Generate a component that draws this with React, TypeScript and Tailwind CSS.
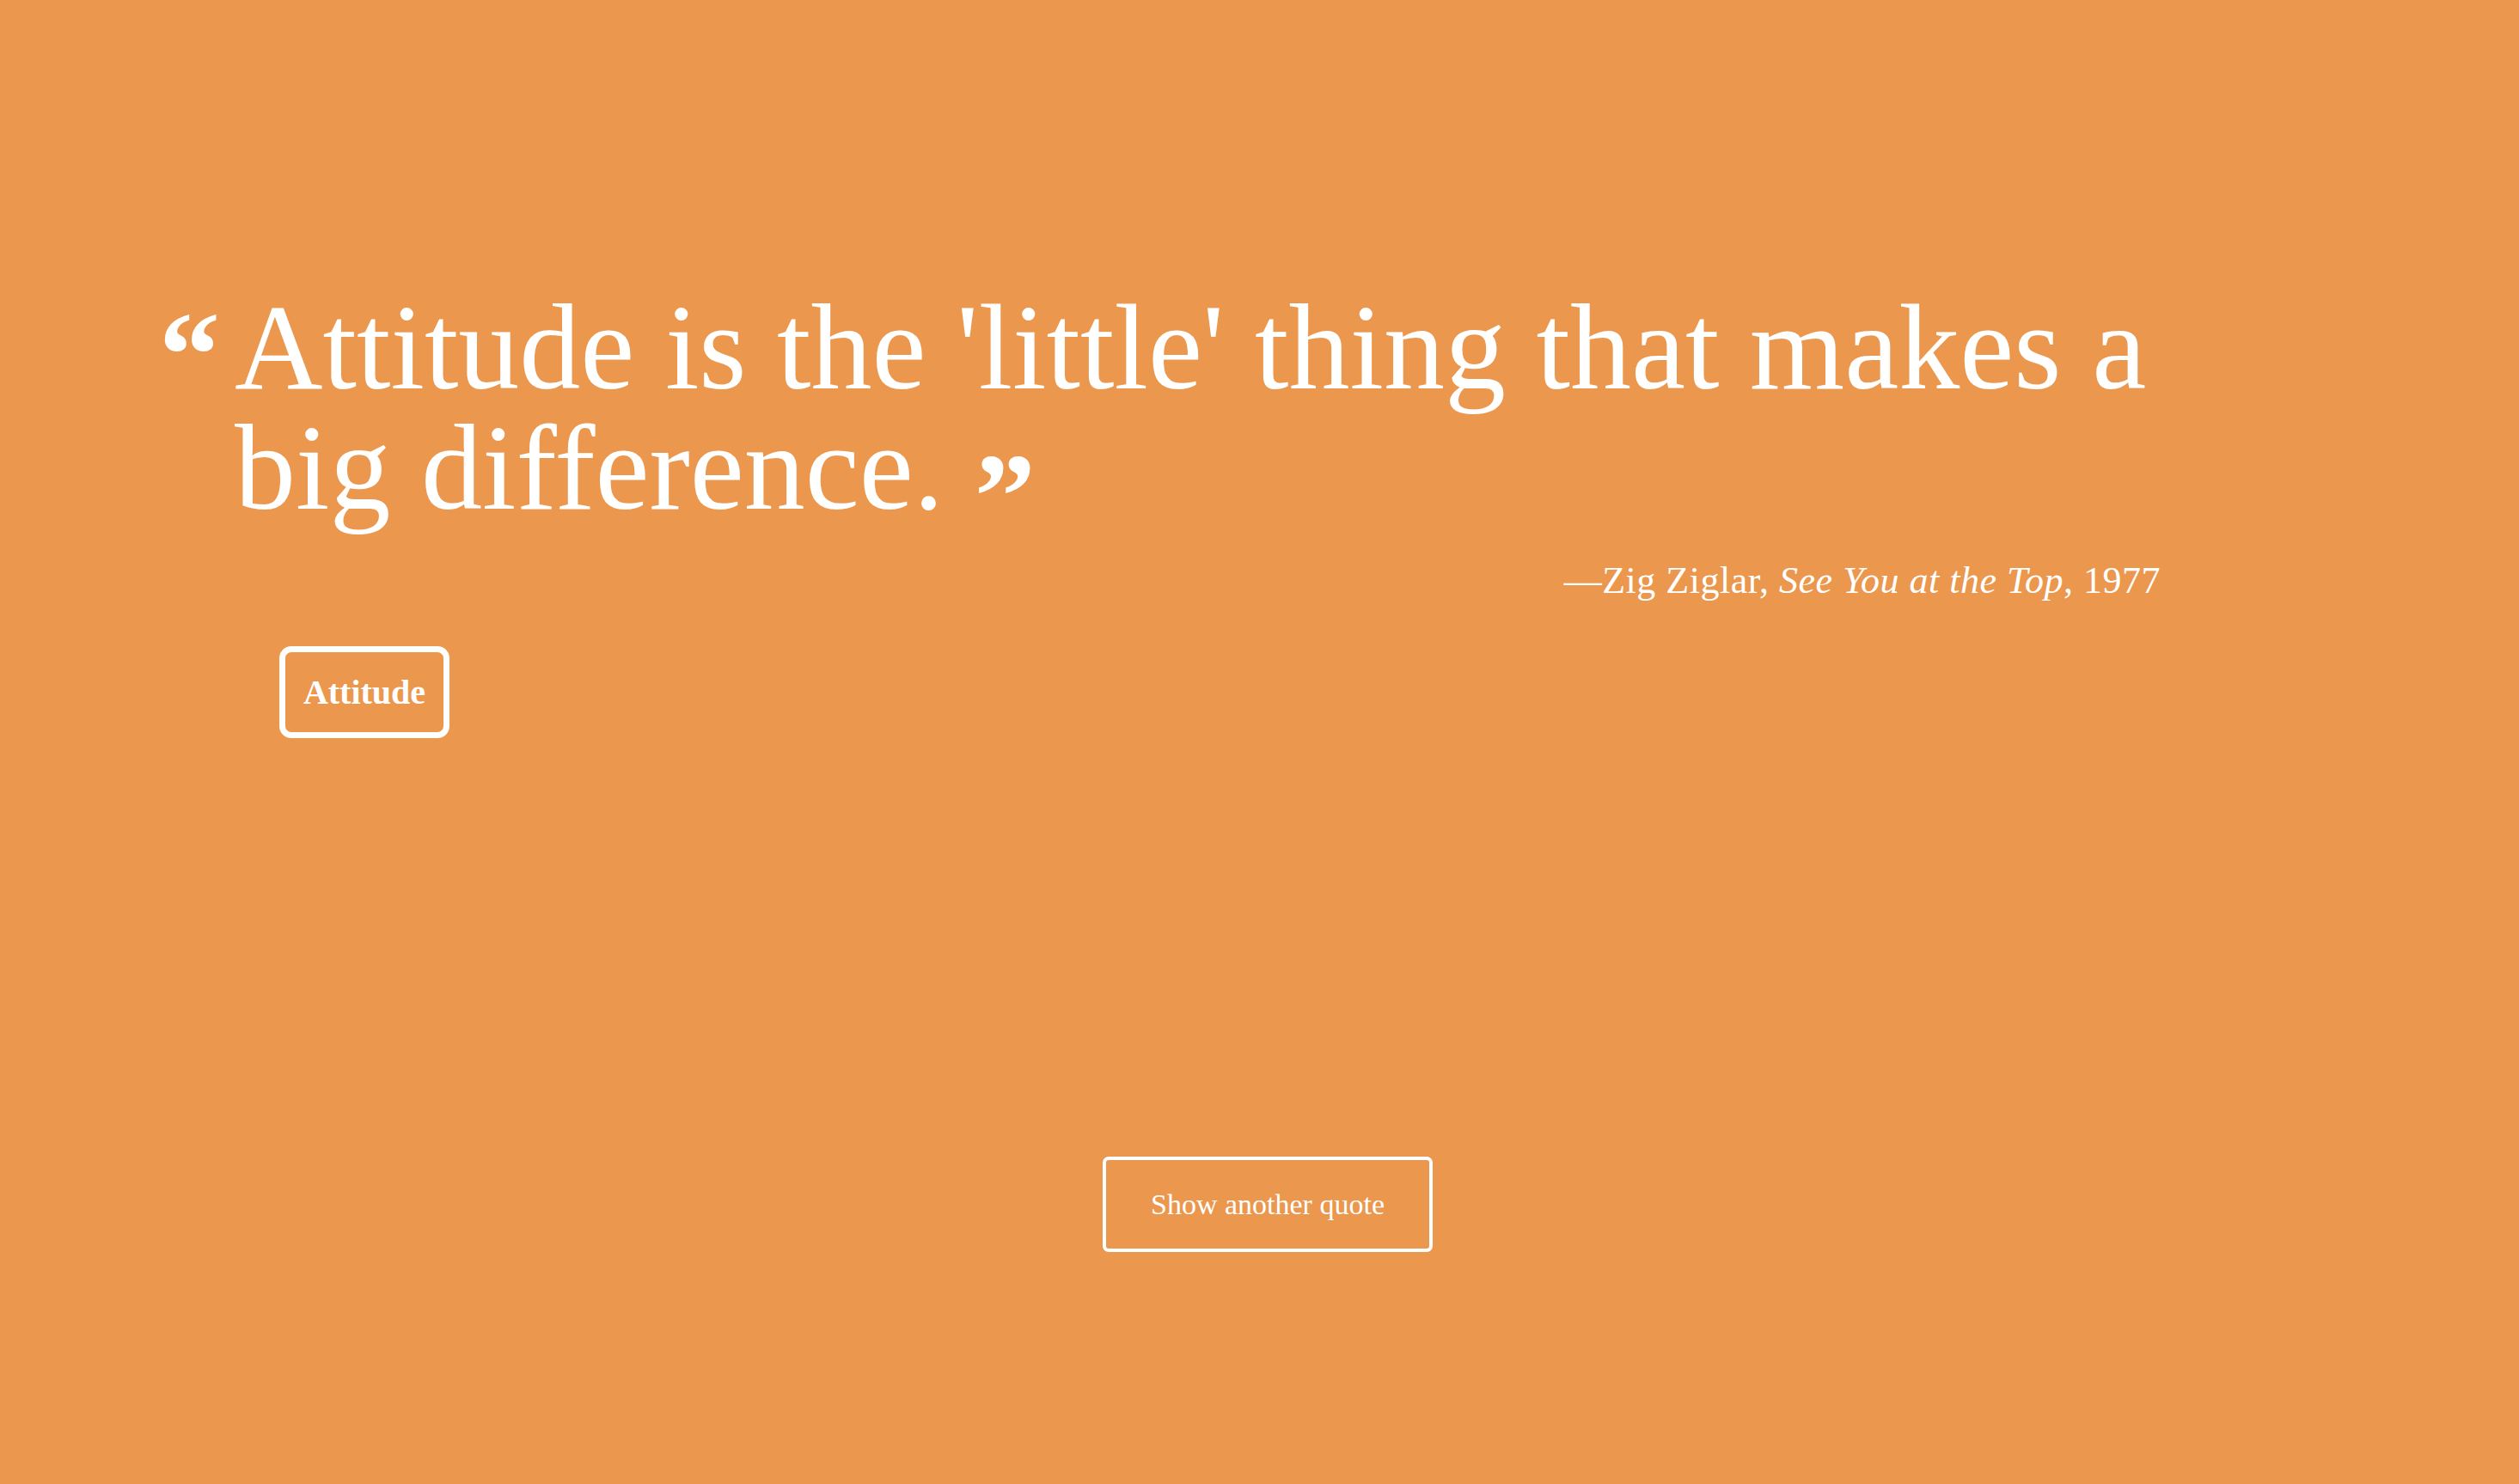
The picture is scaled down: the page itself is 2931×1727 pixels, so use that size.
export default function App() {
  const serif = { fontFamily: '"Liberation Serif", "Times New Roman", serif' };

  return (
    <div className="min-h-screen w-full bg-[#eb974e] text-white" style={serif}>
      <div className="pl-[185px] pt-[334px]">
        <div className="w-[2329px]">
          {/* Quote */}
          <div className="flex items-start">
            <span className="w-[88px] shrink-0 pt-[9px] text-[142px] font-bold leading-[140px]">&ldquo;</span>
            <p className="w-[2290px] shrink-0 text-[142px] leading-[140px]">
              Attitude is the 'little' thing that makes a big difference.{' '}
              <span className="font-bold leading-[0] align-[-34px]">&rdquo;</span>
            </p>
          </div>

          {/* Attribution */}
          <p className="mt-[32px] text-right text-[44px] leading-[60px] tracking-[0.5px]">
            &mdash;Zig Ziglar, <em className="italic">See You at the Top</em>, 1977
          </p>
        </div>

        {/* Tag */}
        <div className="mt-[46px] pl-[140px]">
          <button className="flex h-[107px] w-[198px] items-center justify-center rounded-[14px] border-[7px] border-white text-[40px] font-bold">
            Attitude
          </button>
        </div>
      </div>

      {/* Next quote */}
      <div className="mt-[487px] flex justify-center pl-[19px]">
        <button className="flex h-[111px] w-[384px] items-center justify-center rounded-[7px] border-4 border-white text-[34px]">
          Show another quote
        </button>
      </div>
    </div>
  );
}
